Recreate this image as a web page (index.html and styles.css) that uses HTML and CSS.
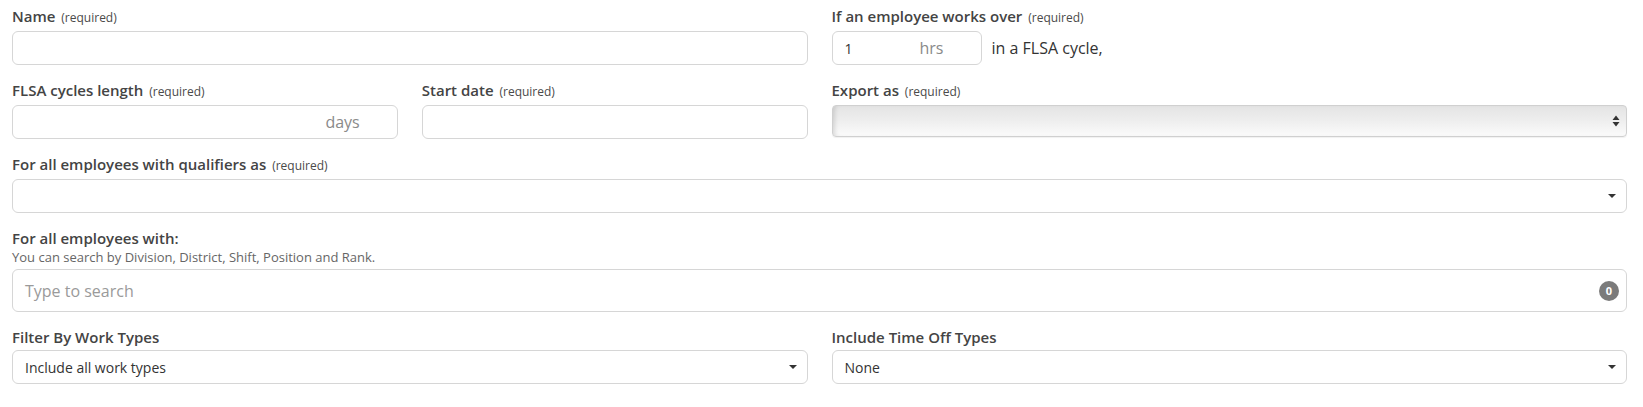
FILE: index.html
```html
<!DOCTYPE html>
<html lang="en">
<head>
<meta charset="utf-8">
<title>FLSA rule</title>
<link rel="stylesheet" href="styles.css">
</head>
<body>
<form class="form">
  <div class="field span-2">
    <label class="label">Name <span class="req">(required)</span></label>
    <div class="input"></div>
  </div>
  <div class="field span-2">
    <label class="label">If an employee works over <span class="req">(required)</span></label>
    <div class="inline-row">
      <div class="input input-hrs">
        <span class="value">1</span>
        <span class="suffix">hrs</span>
      </div>
      <span class="inline-text">in a FLSA cycle,</span>
    </div>
  </div>

  <div class="field">
    <label class="label">FLSA cycles length <span class="req">(required)</span></label>
    <div class="input">
      <span class="suffix">days</span>
    </div>
  </div>
  <div class="field">
    <label class="label">Start date <span class="req">(required)</span></label>
    <div class="input"></div>
  </div>
  <div class="field span-2">
    <label class="label">Export as <span class="req">(required)</span></label>
    <div class="native-select">
      <svg class="updown" width="8" height="12" viewBox="0 0 8 12"><path d="M4 0.5 L7.5 5 L0.5 5 Z M4 11.5 L7.5 7 L0.5 7 Z" fill="#333"/></svg>
    </div>
  </div>

  <div class="field span-4">
    <label class="label">For all employees with qualifiers as <span class="req">(required)</span></label>
    <div class="input select"><span class="caret"></span></div>
  </div>

  <div class="field span-4">
    <label class="label">For all employees with:</label>
    <div class="help">You can search by Division, District, Shift, Position and Rank.</div>
    <div class="input search">
      <span class="placeholder">Type to search</span>
      <span class="badge">0</span>
    </div>
  </div>

  <div class="field span-2">
    <label class="label">Filter By Work Types</label>
    <div class="input select"><span class="value">Include all work types</span><span class="caret"></span></div>
  </div>
  <div class="field span-2">
    <label class="label">Include Time Off Types</label>
    <div class="input select"><span class="value">None</span><span class="caret"></span></div>
  </div>
</form>
</body>
</html>
```

FILE: styles.css
```css
* { box-sizing: border-box; }

html, body {
  margin: 0;
  padding: 0;
  background: #ffffff;
}

body {
  font-family: "Open Sans", "Liberation Sans", sans-serif;
  color: #333333;
}

.form {
  display: grid;
  grid-template-columns: repeat(4, 1fr);
  column-gap: 24px;
  row-gap: 15px;
  padding: 6px 16px 0 12px;
}

.field {
  display: flex;
  flex-direction: column;
  min-width: 0;
}

.span-2 { grid-column: span 2; }
.span-4 { grid-column: span 4; }

.label {
  display: block;
  font-size: 15px;
  font-weight: 600;
  line-height: 20px;
  color: #444444;
  margin-bottom: 3px;
  white-space: nowrap;
}

.req {
  font-size: 12px;
  font-weight: 400;
  color: #4a4a4a;
  margin-left: 2px;
}

.help {
  font-size: 13px;
  line-height: 16px;
  color: #666666;
  margin-top: -2px;
  margin-bottom: 4px;
}

.input {
  position: relative;
  height: 34px;
  border: 1px solid #d6d6d6;
  border-radius: 6px;
  background: #ffffff;
  display: flex;
  align-items: center;
  padding: 0 12px;
}

.value {
  font-size: 14px;
  color: #333333;
}

.suffix {
  position: absolute;
  right: 37px;
  top: 50%;
  transform: translateY(-50%);
  font-size: 16px;
  color: #8a8a8a;
}

.inline-row {
  display: flex;
  align-items: center;
  gap: 10px;
}

.input-hrs {
  width: 150px;
}

.inline-text {
  font-size: 16px;
  color: #333333;
}

.native-select {
  position: relative;
  height: 32px;
  border: 1px solid #d0d0d0;
  border-radius: 4px;
  background: linear-gradient(to bottom, #e4e4e4 0%, #ededed 45%, #fbfbfb 100%);
  box-shadow: inset 4px 0 4px -2px rgba(0, 0, 0, 0.12), 0 1px 1px rgba(0, 0, 0, 0.06);
  display: flex;
  align-items: center;
  justify-content: flex-end;
  padding-right: 6px;
}

.updown { display: block; }

.select .caret {
  position: absolute;
  right: 10px;
  top: 50%;
  margin-top: -2px;
  width: 0;
  height: 0;
  border-left: 4px solid transparent;
  border-right: 4px solid transparent;
  border-top: 4px solid #333333;
}

.search {
  height: 43px;
}

.placeholder {
  font-size: 16px;
  color: #9a9a9a;
}

.badge {
  position: absolute;
  right: 7px;
  top: 50%;
  transform: translateY(-50%);
  width: 20px;
  height: 20px;
  border-radius: 50%;
  background: #7b7b7b;
  color: #ffffff;
  font-size: 11px;
  font-weight: 700;
  line-height: 20px;
  text-align: center;
}
```
